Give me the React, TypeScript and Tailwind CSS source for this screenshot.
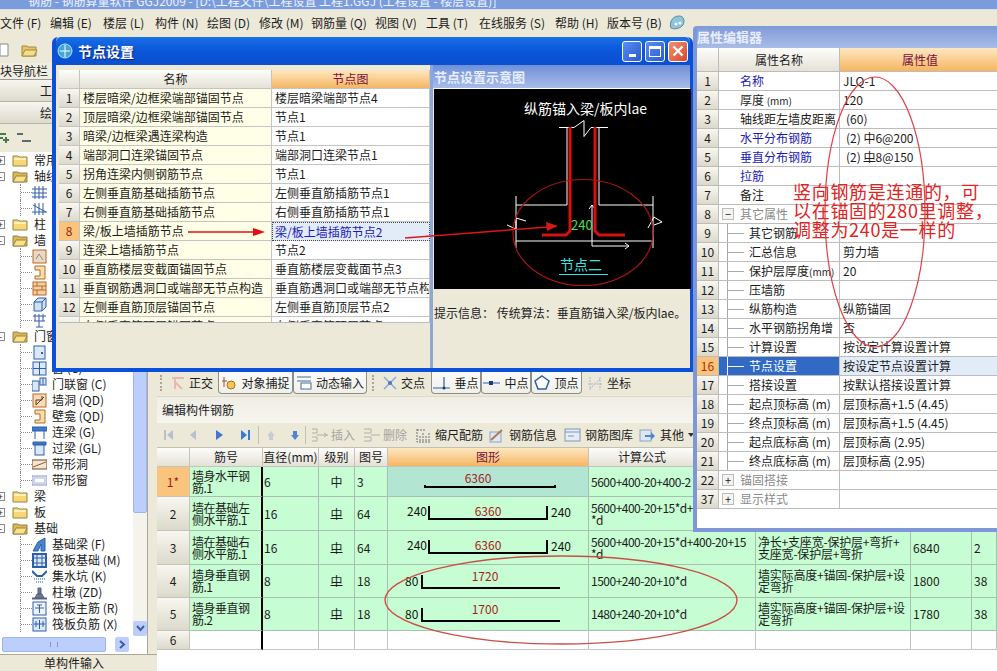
import React from 'react'

const rowHead = 'bg-linear-to-b from-[#f8f7f0] to-[#dcd9cc]'
const colHead = 'bg-linear-to-b from-[#fdfdfa] to-[#e4e1d6]'
const orangeHead = 'bg-linear-to-b from-[#fde7c0] to-[#f4b660] text-[#7a1040]'
const nums = 'tracking-[-0.5px]'

/* little folder + tree icons */
function Folder({ open }: { open?: boolean }) {
  return (
    <svg width="16" height="14" viewBox="0 0 16 14" className="shrink-0">
      <path d="M1 3h5l1 1h8v9H1z" fill={open ? '#d9b65a' : '#f6d877'} stroke="#9a8440" />
      {open ? <path d="M1 13l3-6h11l-3 6z" fill="#f8e08c" stroke="#9a8440" /> : <path d="M2 5h12v2H2z" fill="#fdf0b8" />}
    </svg>
  )
}

function LeafIcon({ kind }: { kind: string }) {
  const blue = '#2f5fa8'
  const org = '#b5682c'
  return (
    <svg width="15" height="15" viewBox="0 0 15 15" className="shrink-0">
      {kind === 'grid' && <path d="M3 1v13M7 1v13M11 1v13M0 4h15M0 8h15M0 12h15" stroke={blue} fill="none" />}
      {kind === 'axis' && <path d="M3 2v12M7 2v12M11 2v12M0 11h15M1 4l13 7" stroke={blue} fill="none" />}
      {kind === 'speck' && (
        <>
          <rect x="1" y="1" width="13" height="13" fill="#e8d8c4" stroke={org} />
          <path d="M4 10l3-5 4 6" stroke="#8a8a8a" fill="none" />
        </>
      )}
      {kind === 'niche' && <path d="M3 1h10v13H3v-3h5V5H3z" fill="#f8dfa8" stroke={org} />}
      {kind === 'brick' && (
        <>
          <rect x="1" y="1" width="13" height="13" fill="#f6d0a0" stroke={org} />
          <path d="M1 5h13M1 9h13M5 1v4M10 5v4M5 9v5" stroke={org} />
        </>
      )}
      {kind === 'box' && (
        <>
          <path d="M2 5l4-4h8v9l-4 4H2z" fill="#cfe0f4" stroke={blue} />
          <path d="M2 5h8v9M10 5l4-4" stroke={blue} fill="none" />
        </>
      )}
      {kind === 'mesh' && <path d="M1 3h13M3 1v7M7 1v13M11 1v7M2 8h11M4 14h7" stroke={blue} fill="none" />}
      {kind === 'door' && (
        <>
          <rect x="2" y="1" width="11" height="13" fill="#dbe8f8" stroke={blue} />
          <rect x="9" y="7" width="2" height="2" fill={blue} />
        </>
      )}
      {kind === 'win' && (
        <>
          <rect x="1" y="1" width="13" height="13" fill="#dbe8f8" stroke={blue} />
          <path d="M7.5 1v13M1 7.5h13" stroke={blue} />
        </>
      )}
      {kind === 'doorwin' && (
        <>
          <rect x="0" y="4" width="7" height="10" fill="#dbe8f8" stroke={blue} />
          <rect x="8" y="1" width="6" height="7" fill="#dbe8f8" stroke={blue} />
          <path d="M11 1v7" stroke={blue} />
        </>
      )}
      {kind === 'hole' && (
        <>
          <rect x="1" y="1" width="13" height="13" fill="#f6dcb8" stroke={org} />
          <path d="M4 12V7h6V3M4 12l8-8" stroke="#5a3a20" fill="none" />
        </>
      )}
      {kind === 'lintel' && <path d="M0 2h15v4H0zM3 6v8M12 6v8" fill="#3f78c8" stroke={blue} />}
      {kind === 'lintel2' && (
        <>
          <path d="M1 1h13v3H1z" fill="#3f78c8" stroke={blue} />
          <rect x="3" y="4" width="9" height="10" fill="#dbe8f8" stroke={blue} />
        </>
      )}
      {kind === 'strip' && (
        <>
          <rect x="0" y="3" width="15" height="9" fill="#f6e6d0" stroke="#6a4a2c" />
          <path d="M1 10l13-5" stroke="#8a5a30" />
        </>
      )}
      {kind === 'stripw' && (
        <>
          <rect x="0" y="3" width="15" height="9" fill="#f0f4fc" stroke="#7f97c8" />
          <rect x="2" y="5" width="11" height="5" fill="#fff" stroke="#a8b8d8" />
        </>
      )}
      {kind === 'beam' && <path d="M1 14l5-9 7-4v13H9V7L6 14z" fill="#4a84cc" stroke={blue} />}
      {kind === 'raft' && (
        <>
          <rect x="1" y="1" width="13" height="13" fill="#dbe8f8" stroke={blue} strokeWidth="2" />
          <path d="M1 5h13M1 10h13M5 1v13M10 1v13" stroke={blue} />
        </>
      )}
      {kind === 'pit' && (
        <>
          <path d="M0 2l5 5h5l5-5" stroke={blue} fill="none" strokeWidth="2" />
          <path d="M2 10h11M4 13h7" stroke="#8ab0dc" strokeDasharray="1 1" strokeWidth="2" />
        </>
      )}
      {kind === 'pier' && <path d="M0 13h15v1H0zM3 13l2-4h5l2 4zM6 3h3v6H6z" fill="#6c7a94" stroke="#55607a" />}
      {kind === 'main' && (
        <>
          <rect x="1" y="1" width="13" height="13" fill="#eef4fc" stroke={blue} />
          <path d="M3 7h9M7.5 4v8M5 4h5" stroke={blue} fill="none" />
        </>
      )}
      {kind === 'neg' && (
        <>
          <rect x="1" y="1" width="13" height="13" fill="#dbe8f8" stroke={blue} />
          <path d="M2 7h11M7.5 3v9M4 4v6M11 4v6" stroke={blue} fill="none" />
        </>
      )}
    </svg>
  )
}

const tree: { label: string; level: 0 | 1; box?: '+' | '-'; icon?: string }[] = [
  { label: '常用构件类型', level: 0, box: '+' },
  { label: '轴线', level: 0, box: '-' },
  { label: '轴网 (J)', level: 1, icon: 'grid' },
  { label: '辅助轴线 (O)', level: 1, icon: 'axis' },
  { label: '柱', level: 0, box: '+' },
  { label: '墙', level: 0, box: '-' },
  { label: '剪力墙 (Q)', level: 1, icon: 'speck' },
  { label: '人防门框墙 (RF)', level: 1, icon: 'niche' },
  { label: '砌体墙 (Q)', level: 1, icon: 'brick' },
  { label: '暗梁 (A)', level: 1, icon: 'box' },
  { label: '砌体加筋 (Y)', level: 1, icon: 'mesh' },
  { label: '门窗洞', level: 0, box: '-' },
  { label: '门 (M)', level: 1, icon: 'door' },
  { label: '窗 (C)', level: 1, icon: 'win' },
  { label: '门联窗 (C)', level: 1, icon: 'doorwin' },
  { label: '墙洞 (QD)', level: 1, icon: 'hole' },
  { label: '壁龛 (QD)', level: 1, icon: 'niche' },
  { label: '连梁 (G)', level: 1, icon: 'lintel' },
  { label: '过梁 (GL)', level: 1, icon: 'lintel2' },
  { label: '带形洞', level: 1, icon: 'strip' },
  { label: '带形窗', level: 1, icon: 'stripw' },
  { label: '梁', level: 0, box: '+' },
  { label: '板', level: 0, box: '+' },
  { label: '基础', level: 0, box: '-' },
  { label: '基础梁 (F)', level: 1, icon: 'beam' },
  { label: '筏板基础 (M)', level: 1, icon: 'raft' },
  { label: '集水坑 (K)', level: 1, icon: 'pit' },
  { label: '柱墩 (ZD)', level: 1, icon: 'pier' },
  { label: '筏板主筋 (R)', level: 1, icon: 'main' },
  { label: '筏板负筋 (X)', level: 1, icon: 'neg' },
]

// rows above the dialog's bottom edge stop where the dialog starts
function TreeRow({ item, covered }: { item: (typeof tree)[number]; covered: boolean }) {
  const clip = covered ? 'w-[52px] overflow-hidden' : ''
  if (item.level === 0) {
    return (
      <div className={`flex h-[16px] items-center whitespace-nowrap ${clip}`}>
        <span className="-ml-[4px] flex h-[9px] w-[9px] shrink-0 items-center justify-center border border-[#888] bg-white text-[9px] leading-none">
          {item.box}
        </span>
        <span className="ml-[7px]">
          <Folder open={item.box === '-'} />
        </span>
        <span className="ml-[6px]">{item.label}</span>
      </div>
    )
  }
  return (
    <div className={`flex h-[16px] items-center whitespace-nowrap ${clip}`}>
      <span className="ml-[20px] flex h-full w-[12px] shrink-0 items-center border-l border-dotted border-[#888]">
        <span className="w-full border-t border-dotted border-[#888]" />
      </span>
      <LeafIcon kind={item.icon!} />
      <span className="ml-[5px]">{item.label}</span>
    </div>
  )
}

function LeftPanel() {
  return (
    <div className="flex w-[157px] shrink-0 flex-col">
      <div className="flex h-[27px] items-center gap-[12px] pl-0">
        <svg width="9" height="14" viewBox="0 0 9 14">
          <path d="M0 1h8v12H0z" fill="#fff" stroke="#888" />
        </svg>
        <svg width="18" height="14" viewBox="0 0 18 14">
          <path d="M1 3h5l1 1h8v9H1z" fill="#e8c468" stroke="#a08a40" />
          <path d="M1 13l3-6h12l-3 6z" fill="#f6dd8c" stroke="#a08a40" />
        </svg>
      </div>
      <div className="h-[17px] overflow-hidden whitespace-nowrap border-b border-[#999] bg-[#f0eee4] pl-0 leading-[15px]">块导航栏</div>
      <div className="flex h-[22px] items-center justify-end border-b border-[#b8b5a6] bg-linear-to-b from-[#f6f5ee] to-[#dedbce] pr-[105px]">工</div>
      <div className="flex h-[22px] items-center justify-end border-b border-[#b8b5a6] bg-linear-to-b from-[#f6f5ee] to-[#dedbce] pr-[105px]">绘</div>
      <div className="flex h-[28px] items-center gap-[6px] pl-0">
        <svg width="10" height="12" viewBox="0 0 10 12">
          <path d="M0 2h6M0 6h3M6 5v6M3 8h6" stroke="#4a7a4a" strokeWidth="2" fill="none" />
        </svg>
        <svg width="16" height="12" viewBox="0 0 16 12">
          <path d="M1 2h6M6 9h9" stroke="#5a6a7a" strokeWidth="2" fill="none" />
        </svg>
      </div>
      <div className="flex min-h-0 flex-1">
        <div className="flex w-[148px] shrink-0 flex-col border-r border-[#aca899] bg-white">
          <div className="flex min-h-0 flex-1">
            <div className="w-[133px] shrink-0 overflow-hidden">
              {tree.map((t, i) => (
                <TreeRow key={t.label} item={t} covered={i < 13} />
              ))}
            </div>
            <div className="flex w-[14px] shrink-0 flex-col bg-[#f4f4ec]">
              <div className="h-[361px] shrink-0 rounded-b-[2px] border border-[#9db4ee] bg-[#bccefb]" />
              <div className="flex-1" />
              <div className="flex h-[15px] shrink-0 items-center justify-center rounded-[2px] bg-[#bccefb] text-[#3f5c9c]">
                <svg width="9" height="7" viewBox="0 0 9 7">
                  <path d="M1 1l3.5 4L8 1" stroke="#3f5c9c" strokeWidth="2" fill="none" />
                </svg>
              </div>
            </div>
          </div>
          <div className="flex h-[18px] shrink-0 items-center pb-[1px]">
            <div className="ml-[2px] flex h-[15px] w-[104px] items-center justify-center rounded-[2px] border border-[#9db4ee] bg-[#bccefb]">
              <span className="h-[5px] w-[8px] border-x border-[#7f97d0]" />
            </div>
            <div className="ml-[9px] flex h-[15px] w-[14px] items-center justify-center rounded-[2px] bg-[#bccefb]">
              <svg width="7" height="9" viewBox="0 0 7 9">
                <path d="M1 1l4 3.5L1 8" stroke="#3f5c9c" strokeWidth="2" fill="none" />
              </svg>
            </div>
          </div>
        </div>
        <div className="flex-1" />
      </div>
      <div className="flex h-[17px] shrink-0 items-center justify-center border-t border-[#aca899] pr-[9px]">单构件输入</div>
    </div>
  )
}

function SnapBtn({ w, label, active, children }: { w: string; label: string; active?: boolean; children: React.ReactNode }) {
  return (
    <div
      className={`flex h-[22px] shrink-0 items-center justify-center gap-[4px] ${w} ${
        active ? 'rounded-b-[4px] border border-t-0 border-[#8f8f88] bg-linear-to-b from-[#fafafa] to-[#f0f0ea]' : ''
      }`}
    >
      {children}
      <span className="whitespace-nowrap">{label}</span>
    </div>
  )
}

function SnapBar() {
  return (
    <div className="flex h-[24px] shrink-0 items-start pl-[3px]">
      <span className="mr-[4px] mt-[3px] h-[16px] border-l-2 border-dotted border-[#aca899]" />
      <SnapBtn w="w-[52px]" label="正交">
        <svg width="14" height="14" viewBox="0 0 14 14">
          <path d="M1 2h12M4 2v11M4 6l7 7" stroke="#e8b8b4" strokeWidth="2" fill="none" />
        </svg>
      </SnapBtn>
      <SnapBtn w="w-[75px]" label="对象捕捉" active>
        <svg width="16" height="15" viewBox="0 0 16 15">
          <path d="M1 6h5M3 2v10" stroke="#a05030" fill="none" />
          <circle cx="10" cy="10" r="4" fill="#f4c850" stroke="#a07820" />
        </svg>
      </SnapBtn>
      <SnapBtn w="w-[74px]" label="动态输入" active>
        <svg width="16" height="15" viewBox="0 0 16 15">
          <path d="M1 2h14M1 6h14" stroke="#4a6a9c" />
          <rect x="5" y="8" width="10" height="6" fill="#fff" stroke="#4a6a9c" />
        </svg>
      </SnapBtn>
      <span className="ml-[5px] mr-[3px] mt-[3px] h-[16px] border-l-2 border-dotted border-[#aca899]" />
      <SnapBtn w="w-[54px]" label="交点">
        <svg width="14" height="14" viewBox="0 0 14 14">
          <path d="M1 1l12 12M13 1L1 13" stroke="#8fa8d8" strokeWidth="1.5" />
          <circle cx="7" cy="7" r="2" fill="#4a78c0" />
        </svg>
      </SnapBtn>
      <SnapBtn w="w-[50px]" label="垂点" active>
        <svg width="17" height="14" viewBox="0 0 17 14">
          <path d="M0 12h17" stroke="#2f5fa8" />
          <path d="M11 1v11" stroke="#1a3c7c" />
          <circle cx="11" cy="12" r="1.5" fill="#1a3c7c" />
        </svg>
      </SnapBtn>
      <SnapBtn w="w-[50px]" label="中点" active>
        <svg width="17" height="14" viewBox="0 0 17 14">
          <path d="M0 7h17" stroke="#2f5fa8" />
          <rect x="6" y="5" width="4" height="4" fill="#1a3c7c" />
        </svg>
      </SnapBtn>
      <SnapBtn w="w-[51px]" label="顶点" active>
        <svg width="16" height="15" viewBox="0 0 16 15">
          <path d="M8 1l7 5-3 8H4L1 6z" fill="#fff" stroke="#2f5fa8" strokeWidth="1.5" />
        </svg>
      </SnapBtn>
      <SnapBtn w="w-[54px]" label="坐标">
        <svg width="16" height="15" viewBox="0 0 16 15">
          <path d="M3 1v13M13 1v13M1 8h14M3 13l10-10" stroke="#a8b8d0" strokeDasharray="2 1" fill="none" />
        </svg>
      </SnapBtn>
    </div>
  )
}

function IconBar() {
  const nav = 'flex h-[24px] shrink-0 items-center'
  return (
    <div className="flex h-[25px] shrink-0 items-center border-b border-[#c4c1b2] pl-[6px]">
      <div className={`${nav} w-[25px]`}>
        <svg width="11" height="12" viewBox="0 0 11 12">
          <path d="M1 1h2v10H1zM10 1v10L4 6z" fill="#b8c0cc" />
        </svg>
      </div>
      <div className={`${nav} w-[27px]`}>
        <svg width="9" height="12" viewBox="0 0 9 12">
          <path d="M8 1v10L2 6z" fill="#b8c0cc" />
        </svg>
      </div>
      <div className={`${nav} w-[25px]`}>
        <svg width="9" height="12" viewBox="0 0 9 12">
          <path d="M1 1v10l7-5z" fill="#3f78d0" />
        </svg>
      </div>
      <div className={`${nav} w-[14px]`}>
        <svg width="11" height="12" viewBox="0 0 11 12">
          <path d="M1 1v10l6-5zM8 1h2v10H8z" fill="#3f78d0" />
        </svg>
      </div>
      <span className="ml-[4px] mr-[7px] h-[18px] border-l border-[#c4c1b2]" />
      <div className={`${nav} w-[24px]`}>
        <svg width="10" height="11" viewBox="0 0 10 11">
          <path d="M5 1l4 5H7v4H3V6H1z" fill="#c4ccd8" />
        </svg>
      </div>
      <div className={`${nav} w-[15px]`}>
        <svg width="10" height="11" viewBox="0 0 10 11">
          <path d="M5 10l4-5H7V1H3v4H1z" fill="#4f84d4" />
        </svg>
      </div>
      <span className="mr-[5px] h-[18px] border-l border-[#c4c1b2]" />
      <div className={`${nav} w-[52px] gap-[2px] text-[#a4a4a0]`}>
        <svg width="18" height="14" viewBox="0 0 18 14">
          <path d="M1 1h5v4H1M1 9h5v4H1M6 7h11M13 5l3 2-3 2" stroke="#b0b0a8" fill="none" />
        </svg>
        插入
      </div>
      <div className={`${nav} w-[53px] gap-[2px] text-[#a4a4a0]`}>
        <svg width="18" height="14" viewBox="0 0 18 14">
          <path d="M1 1h7v4H1M1 9h7v4H1M8 7h9" stroke="#b0b0a8" fill="none" />
        </svg>
        删除
      </div>
      <div className={`${nav} w-[72px] gap-[4px]`}>
        <svg width="15" height="15" viewBox="0 0 15 15">
          <path d="M1 1v13h13M4 13V8M7 13V5M10 13V8M13 13V5M1 2h8" stroke="#6a7080" fill="none" strokeDasharray="2 1" />
        </svg>
        缩尺配筋
      </div>
      <div className={`${nav} w-[76px] gap-[4px]`}>
        <svg width="17" height="15" viewBox="0 0 17 15">
          <rect x="2" y="4" width="11" height="10" fill="#dce8f4" stroke="#8aa4c4" />
          <path d="M3 12L14 2" stroke="#b07a50" strokeWidth="2" />
        </svg>
        钢筋信息
      </div>
      <div className={`${nav} w-[75px] gap-[4px]`}>
        <svg width="17" height="14" viewBox="0 0 17 14">
          <rect x="1" y="1" width="15" height="12" fill="#e4ecf6" stroke="#7f97b8" />
          <path d="M1 4h15M4 8h6" stroke="#7f97b8" />
        </svg>
        钢筋图库
      </div>
      <div className={`${nav} gap-[4px]`}>
        <svg width="17" height="14" viewBox="0 0 17 14">
          <rect x="1" y="2" width="11" height="11" fill="#dce8f4" stroke="#8aa4c4" />
          <path d="M6 7h6V4l4 4-4 4V9H6z" fill="#4f84d4" />
        </svg>
        其他
        <svg width="6" height="4" viewBox="0 0 6 4">
          <path d="M0 0h6L3 4z" fill="#333" />
        </svg>
      </div>
    </div>
  )
}

function Shape({ row }: { row: number }) {
  const blk = '#000'
  const red = '#a81c1c'
  if (row === 1) {
    return (
      <svg width="201" height="30" viewBox="0 0 201 30" className="block">
        <text x="90" y="16" textAnchor="middle" fontSize="12" fill={red}>6360</text>
        <path d="M37 18v2h130v-2" stroke={blk} strokeWidth="2" fill="none" />
      </svg>
    )
  }
  if (row === 2 || row === 3) {
    return (
      <svg width="201" height="34" viewBox="0 0 201 34" className="block">
        <text x="19" y="19" fontSize="12" fill="#111">240</text>
        <text x="100" y="19" textAnchor="middle" fontSize="12" fill={red}>6360</text>
        <text x="163" y="20" fontSize="12" fill="#111">240</text>
        <path d="M41 9v13h118V9" stroke={blk} strokeWidth="2" fill="none" />
      </svg>
    )
  }
  return (
    <svg width="201" height="33" viewBox="0 0 201 33" className="block">
      <text x="17" y="21" fontSize="12" fill="#111">80</text>
      <text x="97" y="16" textAnchor="middle" fontSize="12" fill={red}>{row === 4 ? '1720' : '1700'}</text>
      <path d="M34 10v13h138" stroke={blk} strokeWidth="2" fill="none" />
    </svg>
  )
}

const Grade2 = () => <span className="underline underline-offset-[-1px]">中</span>

// rows 1 and 2 run under the property window, only their left part shows
const rebar = [
  { h: 'h-[30px]', name: '墙身水平钢筋.1', d: '6', g: 1, no: '3', f: '5600+400-20+400-2', desc: '', len: '', n: '' },
  { h: 'h-[34px]', name: '墙在基础左侧水平筋.1', d: '16', g: 2, no: '64', f: '5600+400-20+15*d+\n*d', desc: '', len: '', n: '' },
  { h: 'h-[34px]', name: '墙在基础右侧水平筋.1', d: '16', g: 2, no: '64', f: '5600+400-20+15*d+400-20+15\n*d', desc: '净长+支座宽-保护层+弯折+\n支座宽-保护层+弯折', len: '6840', n: '2' },
  { h: 'h-[33px]', name: '墙身垂直钢筋.1', d: '8', g: 2, no: '18', f: '1500+240-20+10*d', desc: '墙实际高度+锚固-保护层+设\n定弯折', len: '1800', n: '38' },
  { h: 'h-[33px]', name: '墙身垂直钢筋.2', d: '8', g: 2, no: '18', f: '1480+240-20+10*d', desc: '墙实际高度+锚固-保护层+设\n定弯折', len: '1780', n: '38' },
]

function RebarTable() {
  const cols = 'grid grid-cols-[33px_73px_56px_36px_33px_201px_167px_155px_61px_25px]'
  const line = 'border-r border-b border-[#a9bfb2]'
  const hcell = `flex h-[19px] items-center justify-center whitespace-nowrap border-r border-b border-[#c4c4bc] ${colHead}`
  return (
    <div className="h-[223px] shrink-0 overflow-hidden bg-white">
      <div className={cols}>
        <div className={hcell} />
        <div className={hcell}>筋号</div>
        <div className={hcell}>直径(mm)</div>
        <div className={hcell}>级别</div>
        <div className={hcell}>图号</div>
        <div className={`flex h-[19px] items-center justify-center border-b border-r border-[#c4c4bc] ${orangeHead}`}>图形</div>
        <div className={`${hcell} pr-[60px]`}>计算公式</div>
        <div className={hcell} />
        <div className={hcell} />
        <div className={hcell} />
      </div>
      {rebar.map((r, i) => (
        <div key={i} className={`${cols} ${r.h} bg-[#c6fdd2] leading-[12px]`}>
          <div
            className={`flex items-center justify-center border-b border-r border-[#c4c4bc] ${
              i === 0 ? 'bg-[#fbc47c] text-[#9a1c1c]' : rowHead
            }`}
          >
            {i === 0 ? '1*' : i + 1}
          </div>
          <div className={`flex items-center border-b border-r-2 border-b-[#a9bfb2] border-r-black px-[2px] ${nums}`}>
            <span>{r.name}</span>
          </div>
          <div className={`flex items-center pl-[1px] ${line}`}>{r.d}</div>
          <div className={`flex items-center justify-center ${line}`}>{r.g === 1 ? '中' : <Grade2 />}</div>
          <div className={`flex items-center pl-[2px] ${line}`}>{r.no}</div>
          <div className={`overflow-hidden ${line} ${i === 0 ? 'bg-[#b3e5d3]' : ''}`}>
            <Shape row={i + 1} />
          </div>
          <div className={`flex items-center overflow-hidden whitespace-pre px-[2px] ${nums} ${line}`}>{r.f}</div>
          <div className={`flex items-center whitespace-pre px-[2px] tracking-[-0.2px] ${line}`}>{r.desc}</div>
          <div className={`flex items-center pl-[2px] ${line}`}>{r.len}</div>
          <div className={`flex items-center pl-[2px] ${line}`}>{r.n}</div>
        </div>
      ))}
      <div className={`${cols} h-[19px]`}>
        <div className={`flex items-center justify-center border-b border-r border-[#c4c4bc] ${rowHead}`}>6</div>
        <div className="border-b border-r-2 border-b-[#c4c4c4] border-r-black" />
        {[0, 1, 2, 3, 4, 5, 6, 7].map((k) => (
          <div key={k} className="border-b border-r border-[#c4c4c4]" />
        ))}
      </div>
    </div>
  )
}

const nodes = [
  ['楼层暗梁/边框梁端部锚固节点', '楼层暗梁端部节点4'],
  ['顶层暗梁/边框梁端部锚固节点', '节点1'],
  ['暗梁/边框梁遇连梁构造', '节点1'],
  ['端部洞口连梁锚固节点', '端部洞口连梁节点1'],
  ['拐角连梁内侧钢筋节点', '节点1'],
  ['左侧垂直筋基础插筋节点', '左侧垂直筋插筋节点1'],
  ['右侧垂直筋基础插筋节点', '右侧垂直筋插筋节点1'],
  ['梁/板上墙插筋节点', '梁/板上墙插筋节点2'],
  ['连梁上墙插筋节点', '节点2'],
  ['垂直筋楼层变截面锚固节点', '垂直筋楼层变截面节点3'],
  ['垂直钢筋遇洞口或端部无节点构造', '垂直筋遇洞口或端部无节点构造1'],
  ['左侧垂直筋顶层锚固节点', '左侧垂直筋顶层节点2'],
  ['右侧垂直筋顶层锚固节点', '右侧垂直筋顶层节点2'],
]

function NodeGrid() {
  const cols = 'grid grid-cols-[21px_192px_158px]'
  const b = 'border-r border-b border-[#c4c4c4]'
  return (
    <div className="h-[253px] w-[371px] overflow-hidden border-b border-[#bbb] bg-white">
      <div className={`${cols} h-[19px]`}>
        <div className={`${b} ${colHead}`} />
        <div className={`flex items-center justify-center ${b} ${colHead}`}>名称</div>
        <div className={`flex items-center justify-center ${b} ${orangeHead}`}>节点图</div>
      </div>
      {nodes.map(([name, val], i) => (
        <div key={i} className={`${cols} h-[19px]`}>
          <div className={`flex items-center justify-center ${b} ${i === 7 ? 'bg-[#fbc47c] text-[#9a1c1c]' : rowHead}`}>{i + 1}</div>
          <div className={`flex items-center overflow-hidden whitespace-nowrap pl-[3px] ${b} bg-[#fffee6]`}>{name}</div>
          {i === 7 ? (
            <div className="flex items-center overflow-hidden whitespace-nowrap border border-dotted border-[#445] bg-[#e2ebf8] pl-[2px] text-[#1a1ab8]">{val}</div>
          ) : (
            <div className={`flex items-center overflow-hidden whitespace-nowrap pl-[3px] ${b}`}>{val}</div>
          )}
        </div>
      ))}
    </div>
  )
}

function Diagram() {
  return (
    <svg width="257" height="200" viewBox="434 90 257 200" className="block bg-black">
      <text x="524" y="115" fontSize="14" fill="#fff">纵筋锚入梁/板内lae</text>
      <g stroke="#fff" fill="none">
        <path d="M559 128.5h15l10-7v16l7-9h17" />
        <path d="M567 128v78h-51M599 128v78h54M516 197v52M653 197v52M516 242h137" />
        <path d="M592 206v41h37M589 210l3-4 3 4M625 244l4 3-4 3" />
        <path d="M507 226l9 4v-11l10 3M648 229l6-11 8 5-8 3" />
      </g>
      <path d="M570 128v104l-4 4h-24M595 128v104l4 4h26" stroke="#d41010" strokeWidth="3" fill="none" />
      <text x="571" y="231" fontSize="13" fill="#4ce04c">240</text>
      <text x="560" y="271" fontSize="14" fill="#3fe0e0">节点二</text>
      <path d="M559 275.5h49" stroke="#3fe0e0" />
      <ellipse cx="583" cy="233.5" rx="70" ry="53" fill="none" stroke="#a81414" strokeWidth="1.2" />
    </svg>
  )
}

function WinBtn({ tone, children }: { tone: string; children: React.ReactNode }) {
  return <div className={`flex h-[21px] w-[20px] items-center justify-center rounded-[3px] border border-white ${tone}`}>{children}</div>
}

function NodeDialog() {
  return (
    <div className="absolute left-[52px] top-[37px] flex h-[335px] w-[641px] flex-col rounded-t-[6px] border-x-[3px] border-b-[4px] border-[#0a50d8] border-l-[4px] bg-[#ece9d8]">
      <div className="flex h-[28px] shrink-0 items-center rounded-t-[5px] bg-linear-to-b from-[#1a70e8] via-[#0a55d8] to-[#0a50d0] pl-[1px] pr-[2px]">
        <svg width="16" height="16" viewBox="0 0 16 16">
          <circle cx="8" cy="8" r="7" fill="#3fa8d8" stroke="#bfe4f4" />
          <path d="M8 2v12M3 8h10" stroke="#fff" />
        </svg>
        <span className="ml-[5px] text-[14px] font-bold text-white [text-shadow:1px_1px_1px_#0a2a80]">节点设置</span>
        <div className="ml-auto flex gap-[3px] pr-0">
          <WinBtn tone="bg-linear-to-br from-[#5a8cf0] to-[#2a5cd0]">
            <span className="mt-[8px] h-[3px] w-[7px] bg-white" />
          </WinBtn>
          <WinBtn tone="bg-linear-to-br from-[#5a8cf0] to-[#2a5cd0]">
            <span className="h-[11px] w-[12px] border border-t-[3px] border-white" />
          </WinBtn>
          <WinBtn tone="bg-linear-to-br from-[#f09070] to-[#d8452a]">
            <svg width="12" height="12" viewBox="0 0 12 12">
              <path d="M1.5 1.5l9 9M10.5 1.5l-9 9" stroke="#fff" strokeWidth="2.4" />
            </svg>
          </WinBtn>
        </div>
      </div>
      <div className="flex min-h-0 flex-1">
        <div className="w-[374px] shrink-0 pl-[3px] pt-[5px]">
          <NodeGrid />
        </div>
        <div className="w-[3px] shrink-0 bg-[#8fa6dc]" />
        <div className="flex min-w-0 flex-1 flex-col">
          <div className="flex h-[24px] shrink-0 items-center border-b border-white bg-linear-to-b from-[#6f90d8] to-[#a8bde8] pl-[1px] text-[13px] font-bold text-[#e8eefc]">节点设置示意图</div>
          <div className="pl-[1px]">
            <Diagram />
          </div>
          <div className="whitespace-nowrap pl-[1px] pt-[15px] text-[12px]">提示信息： 传统算法：垂直筋锚入梁/板内lae。</div>
        </div>
      </div>
    </div>
  )
}

const mm = <span className="text-[10px]">(mm)</span>
const props: { no: string; name: React.ReactNode; val?: React.ReactNode; tone?: 'blue' | 'grey'; sub?: boolean; box?: string; pad?: boolean }[] = [
  { no: '1', name: '名称', val: 'JLQ-1', tone: 'blue' },
  { no: '2', name: <>厚度 {mm}</>, val: '120' },
  { no: '3', name: '轴线距左墙皮距离', val: '(60)', pad: true },
  { no: '4', name: '水平分布钢筋', val: '(2) 中6@200', tone: 'blue', pad: true },
  { no: '5', name: '垂直分布钢筋', val: <>(2) <Grade2 />8@150</>, tone: 'blue', pad: true },
  { no: '6', name: '拉筋', tone: 'blue' },
  { no: '7', name: '备注' },
  { no: '8', name: '其它属性', tone: 'grey', box: '-' },
  { no: '9', name: '其它钢筋', sub: true },
  { no: '10', name: '汇总信息', val: '剪力墙', sub: true },
  { no: '11', name: <>保护层厚度{mm}</>, val: '20', sub: true },
  { no: '12', name: '压墙筋', sub: true },
  { no: '13', name: '纵筋构造', val: '纵筋锚固', sub: true },
  { no: '14', name: '水平钢筋拐角增', val: '否', sub: true },
  { no: '15', name: '计算设置', val: '按设定计算设置计算', sub: true },
  { no: '16', name: '节点设置', val: '按设定节点设置计算', sub: true },
  { no: '17', name: '搭接设置', val: '按默认搭接设置计算', sub: true },
  { no: '18', name: '起点顶标高 (m)', val: '层顶标高+1.5 (4.45)', sub: true },
  { no: '19', name: '终点顶标高 (m)', val: '层顶标高+1.5 (4.45)', sub: true },
  { no: '20', name: '起点底标高 (m)', val: '层顶标高 (2.95)', sub: true },
  { no: '21', name: '终点底标高 (m)', val: '层顶标高 (2.95)', sub: true },
  { no: '22', name: '锚固搭接', tone: 'grey', box: '+' },
  { no: '37', name: '显示样式', tone: 'grey', box: '+' },
]

function PropWindow() {
  const cols = 'grid grid-cols-[22px_121px_161px]'
  const b = 'border-r border-b border-[#bcbcbc]'
  return (
    <div className="absolute left-[693px] top-[26px] flex h-[506px] w-[304px] flex-col rounded-tl-[4px] border-b-[4px] border-l-[4px] border-[#7f97d8] bg-white">
      <div className="flex h-[22px] shrink-0 items-center bg-linear-to-b from-[#7f9ad8] to-[#a9bde8] text-[13px] font-bold text-[#e8eefc]">属性编辑器</div>
      <div className={`${cols} h-[24px] shrink-0`}>
        <div className={`${b} ${colHead}`} />
        <div className={`flex items-center justify-center ${b} ${colHead}`}>属性名称</div>
        <div className={`flex items-center justify-center ${b} ${orangeHead}`}>属性值</div>
      </div>
      {props.map((p) => {
        const sel = p.no === '16'
        return (
          <div key={p.no} className={`${cols} h-[19px] shrink-0`}>
            <div className={`flex items-center justify-center ${b} ${sel ? 'bg-[#fbc47c] text-[#b03000]' : rowHead}`}>{p.no}</div>
            <div
              className={`flex items-center overflow-hidden whitespace-nowrap ${b} ${sel ? 'bg-[#316ac5] text-white' : ''} ${
                p.tone === 'blue' ? 'text-[#1a1ab8]' : p.tone === 'grey' ? 'text-[#8a8a8a]' : ''
              }`}
            >
              {p.sub ? (
                <span className={`ml-[8px] mr-[5px] flex h-full w-[17px] shrink-0 items-center border-l ${sel ? 'border-white' : 'border-[#a8a8a8]'}`}>
                  <span className={`w-full border-t ${sel ? 'border-white' : 'border-[#a8a8a8]'}`} />
                </span>
              ) : p.box ? (
                <span className="ml-[3px] mr-[6px] flex h-[12px] w-[12px] shrink-0 items-center justify-center border border-[#bbb] bg-[#f4f4f0] text-[11px] leading-none text-[#222]">
                  {p.box === '-' ? '−' : '+'}
                </span>
              ) : (
                <span className="w-[21px] shrink-0" />
              )}
              <span>{p.name}</span>
            </div>
            <div className={`flex items-center overflow-hidden whitespace-pre ${p.pad ? 'pl-[6px]' : 'pl-[3px]'} ${b} ${sel ? 'bg-[#e2ebf8]' : ''}`}>{p.val}</div>
          </div>
        )
      })}
    </div>
  )
}

const menus = [
  ['文件 (F)', 'w-[50px]'],
  ['编辑 (E)', 'w-[53px]'],
  ['楼层 (L)', 'w-[52px]'],
  ['构件 (N)', 'w-[52px]'],
  ['绘图 (D)', 'w-[52px]'],
  ['修改 (M)', 'w-[52px]'],
  ['钢筋量 (Q)', 'w-[64px]'],
  ['视图 (V)', 'w-[51px]'],
  ['工具 (T)', 'w-[53px]'],
  ['在线服务 (S)', 'w-[76px]'],
  ['帮助 (H)', 'w-[52px]'],
  ['版本号 (B)', 'w-[61px]'],
]

export default function App() {
  return (
    <div className="relative flex h-[671px] w-[997px] flex-col overflow-hidden bg-[#ece9d8] font-['Noto_Sans_CJK_SC','Liberation_Sans',sans-serif] text-[12px] text-[#1c1c1c]">
      <div className="h-[10px] shrink-0 overflow-hidden whitespace-nowrap border-b border-[#d8e0f0] bg-[#7a9cdc] pl-[28px] text-[12px] leading-[2px] text-[#eef2fc]">
        钢筋 - 钢筋算量软件 GGJ2009 - [D:\工程文件\工程设置 工程1.GGJ (工程设置 - 楼层设置)]
      </div>
      <div className="flex h-[26px] shrink-0 items-center">
        {menus.map(([m, w]) => (
          <span key={m} className={`${w} shrink-0 whitespace-nowrap`}>{m}</span>
        ))}
        <svg width="18" height="18" viewBox="0 0 18 18">
          <path d="M3 14c-2-5 1-12 8-12 5 0 6 5 4 9-2 3-8 5-12 3z" fill="#8fc4dc" stroke="#5a8ca8" />
          <circle cx="8" cy="10" r="1.5" fill="#fff" />
          <circle cx="12" cy="9" r="1.5" fill="#fff" />
        </svg>
      </div>
      <div className="flex min-h-0 flex-1">
        <LeftPanel />
        <div className="flex min-w-0 flex-1 flex-col">
          <div className="flex-1" />
          <SnapBar />
          <div className="flex h-[27px] shrink-0 items-center border-t border-[#dedbce] bg-linear-to-b from-[#f0eee4] to-[#f6f5ee] pl-[5px]">编辑构件钢筋</div>
          <IconBar />
          <RebarTable />
        </div>
      </div>

      <NodeDialog />
      <PropWindow />

      {/* hand-drawn markup on top of the screenshot */}
      <svg width="997" height="671" viewBox="0 0 997 671" className="pointer-events-none absolute inset-0">
        <path d="M188 232h66" stroke="#e01010" strokeWidth="1.5" />
        <path d="M253 228l12 4-12 4z" fill="#e01010" />
        <path d="M405 238L548 227" stroke="#d81818" strokeWidth="1.5" />
        <path d="M546 222l12 4-11 5z" fill="#d81818" />
        <ellipse cx="875" cy="212" rx="50" ry="135" fill="none" stroke="#e0404a" strokeWidth="1.2" />
        <ellipse cx="561" cy="600" rx="176" ry="44" fill="none" stroke="#c85048" strokeWidth="1.4" />
      </svg>
      <div className="absolute left-[793px] top-[182px] whitespace-pre text-[18px] leading-[19px] tracking-[0.7px] text-[#e02424]">
        {'竖向钢筋是连通的，可\n以在锚固的280里调整，\n调整为240是一样的'}
      </div>
    </div>
  )
}
